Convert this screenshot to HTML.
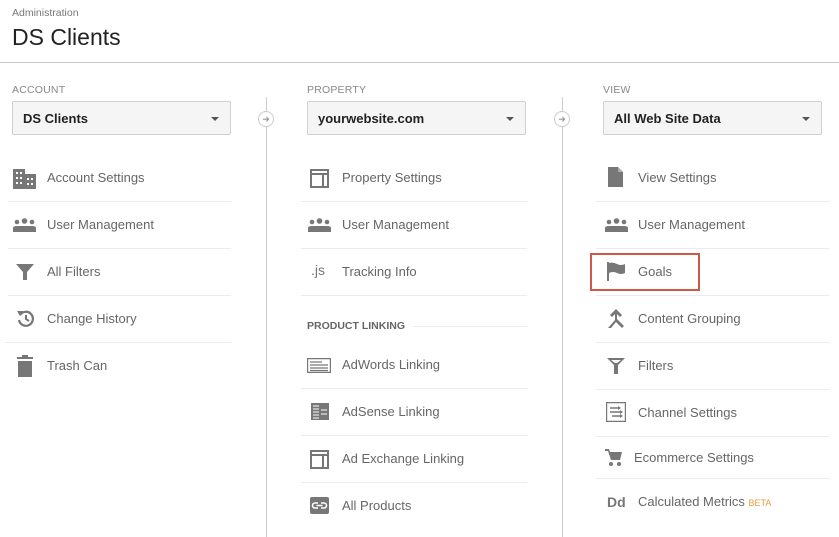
<!DOCTYPE html>
<html><head><meta charset="utf-8"><style>
*{margin:0;padding:0;box-sizing:border-box}
body{width:839px;height:537px;background:#fff;font-family:"Liberation Sans",Arial,sans-serif;position:relative;overflow:hidden;color:#666}
.a{position:absolute}
.lbl{font-size:10.5px;color:#888;letter-spacing:.2px}
.dd{position:absolute;height:34px;border:1px solid #d0d0d0;border-radius:2px;background:#f5f5f5;font-weight:bold;font-size:13px;color:#222;padding:9px 0 0 10px}
.dd:after{content:"";position:absolute;right:11px;top:15px;border-left:4px solid transparent;border-right:4px solid transparent;border-top:4px solid #555}
.vl{position:absolute;width:1px;background:#ccc;top:97px;height:440px}
.circ{position:absolute;width:16px;height:16px;border:1px solid #ccc;border-radius:50%;background:#fff;font-size:9px;color:#999;text-align:center;line-height:14px}
.it{position:absolute;font-size:13px;color:#666;white-space:nowrap}
.sep{position:absolute;height:1px;background:#ececec}
svg{position:absolute}
</style></head><body>
<div class="a" style="left:12px;top:7px;font-size:10.5px;color:#777">Administration</div>
<div class="a" style="left:12px;top:24px;font-size:23px;color:#222">DS Clients</div>
<div class="a" style="left:0;top:62px;width:839px;height:1px;background:#ccc"></div>

<div class="a lbl" style="left:12px;top:84px">ACCOUNT</div>
<div class="a lbl" style="left:307px;top:84px">PROPERTY</div>
<div class="a lbl" style="left:603px;top:84px">VIEW</div>
<div class="dd" style="left:12px;top:101px;width:219px">DS Clients</div>
<div class="dd" style="left:307px;top:101px;width:219px">yourwebsite.com</div>
<div class="dd" style="left:603px;top:101px;width:219px">All Web Site Data</div>

<div class="vl" style="left:266px"></div>
<div class="vl" style="left:562px"></div>
<div class="circ" style="left:258px;top:111px">➜</div>
<div class="circ" style="left:554px;top:111px">➜</div>

<!-- Account column -->
<svg style="left:13px;top:169px" width="23" height="20"><path fill="#777" d="M0 0h12v5h11v15H0z"/><g fill="#fff"><rect x="3" y="3" width="2" height="2"/><rect x="7" y="3" width="2" height="2"/><rect x="3" y="8" width="2" height="2"/><rect x="7" y="8" width="2" height="2"/><rect x="3" y="13" width="2" height="2"/><rect x="7" y="13" width="2" height="2"/><rect x="14" y="9" width="2" height="2"/><rect x="18" y="9" width="2" height="2"/><rect x="14" y="14" width="2" height="2"/><rect x="18" y="14" width="2" height="2"/></g></svg>
<div class="it" style="left:47px;top:170px">Account Settings</div>
<div class="sep" style="left:8px;top:201px;width:223px"></div>
<svg style="left:13px;top:218px" width="23" height="14"><g fill="#777"><circle cx="4" cy="4" r="2.3"/><circle cx="11.5" cy="3" r="2.8"/><circle cx="19" cy="4" r="2.3"/><path d="M0 14v-4q0-2 4-2h15q4 0 4 2v4z"/></g></svg>
<div class="it" style="left:47px;top:217px">User Management</div>
<div class="sep" style="left:8px;top:248px;width:223px"></div>
<svg style="left:16px;top:264px" width="18" height="16"><path fill="#777" d="M0 0h18L11 8v8H7V8z"/></svg>
<div class="it" style="left:47px;top:264px">All Filters</div>
<div class="sep" style="left:8px;top:295px;width:223px"></div>
<svg style="left:17px;top:310px" width="18" height="17"><path fill="none" stroke="#777" stroke-width="2.2" d="M3 5A7 7 0 1 1 2 10"/><path fill="#777" d="M0 1l6 0-3 5z"/><path fill="none" stroke="#777" stroke-width="2" d="M9 5v4l3 2"/></svg>
<div class="it" style="left:47px;top:311px">Change History</div>
<div class="sep" style="left:5px;top:342px;width:226px"></div>
<svg style="left:17px;top:355px" width="16" height="22"><path fill="#777" d="M0 2h5V0h6v2h5v2H0zM1 6h14v16H1z"/></svg>
<div class="it" style="left:47px;top:358px">Trash Can</div>

<!-- Property column -->
<svg style="left:310px;top:169px" width="19" height="19"><path fill="none" stroke="#777" stroke-width="2" d="M1 1h17v17H1zM1 5h17M13 5v13"/></svg>
<div class="it" style="left:342px;top:170px">Property Settings</div>
<div class="sep" style="left:301px;top:201px;width:226px"></div>
<svg style="left:308px;top:218px" width="23" height="14"><g fill="#777"><circle cx="4" cy="4" r="2.3"/><circle cx="11.5" cy="3" r="2.8"/><circle cx="19" cy="4" r="2.3"/><path d="M0 14v-4q0-2 4-2h15q4 0 4 2v4z"/></g></svg>
<div class="it" style="left:342px;top:217px">User Management</div>
<div class="sep" style="left:301px;top:248px;width:226px"></div>
<div class="it" style="left:311px;top:262px;font-size:14px;color:#777">.js</div>
<div class="it" style="left:342px;top:264px">Tracking Info</div>
<div class="sep" style="left:301px;top:295px;width:226px"></div>
<div class="it" style="left:307px;top:320px;font-size:10.5px;font-weight:bold;color:#666">PRODUCT LINKING</div>
<div class="sep" style="left:413px;top:326px;width:114px"></div>
<svg style="left:307px;top:358px" width="24" height="15"><path fill="none" stroke="#777" stroke-width="1.2" d="M.6.6h22.8v13.8H.6z"/><path stroke="#777" stroke-width="1.3" d="M3 4h12M3 7h18M3 10h18M3 12.5h18"/></svg>
<div class="it" style="left:342px;top:357px">AdWords Linking</div>
<div class="sep" style="left:301px;top:388px;width:226px"></div>
<svg style="left:311px;top:403px" width="18" height="17"><path fill="#777" d="M0 0h18v17H0z"/><path stroke="#fff" stroke-width="1" d="M2 3h6M2 6h6M2 9h6M2 12h6M2 15h6M10 7h6M10 11h6"/></svg>
<div class="it" style="left:342px;top:404px">AdSense Linking</div>
<div class="sep" style="left:301px;top:435px;width:226px"></div>
<svg style="left:310px;top:450px" width="19" height="19"><path fill="none" stroke="#777" stroke-width="2" d="M1 1h17v17H1zM1 5h17M13 5v13"/></svg>
<div class="it" style="left:342px;top:451px">Ad Exchange Linking</div>
<div class="sep" style="left:301px;top:482px;width:226px"></div>
<svg style="left:310px;top:497px" width="19" height="17"><rect width="19" height="17" rx="2" fill="#777"/><path fill="none" stroke="#fff" stroke-width="1.6" d="M8 6H5a2.5 2.5 0 0 0 0 5h3M11 6h3a2.5 2.5 0 0 1 0 5h-3M6.5 8.5h6"/></svg>
<div class="it" style="left:342px;top:498px">All Products</div>

<!-- View column -->
<svg style="left:608px;top:167px" width="15" height="20"><path fill="#777" d="M0 0h10l5 5v15H0z"/><path fill="#aaa" d="M10 0v5h5z"/></svg>
<div class="it" style="left:638px;top:170px">View Settings</div>
<div class="sep" style="left:596px;top:201px;width:233px"></div>
<svg style="left:605px;top:218px" width="23" height="14"><g fill="#777"><circle cx="4" cy="4" r="2.3"/><circle cx="11.5" cy="3" r="2.8"/><circle cx="19" cy="4" r="2.3"/><path d="M0 14v-4q0-2 4-2h15q4 0 4 2v4z"/></g></svg>
<div class="it" style="left:638px;top:217px">User Management</div>
<div class="sep" style="left:596px;top:248px;width:233px"></div>
<div class="a" style="left:590px;top:253px;width:110px;height:38px;border:2px solid #cc5a45"></div>
<svg style="left:607px;top:262px" width="19" height="19"><path fill="#777" d="M0 0h2v19H0zM2 1q4-1 8 1t8 0v9q-4 2-8 0t-8 0z"/></svg>
<div class="it" style="left:638px;top:264px">Goals</div>
<div class="sep" style="left:596px;top:295px;width:233px"></div>
<svg style="left:608px;top:309px" width="16" height="19"><path fill="#777" d="M8 0l6 6-2 2-3-3v5l7 7-2 2-6-6-5 6H0l7-8V5L4 8 2 6z"/></svg>
<div class="it" style="left:638px;top:311px">Content Grouping</div>
<div class="sep" style="left:596px;top:342px;width:233px"></div>
<svg style="left:607px;top:358px" width="18" height="16"><path fill="#777" d="M0 0h18L11 7v9H7V7z"/><path fill="#fff" d="M4 2h10l-4 3H8z"/></svg>
<div class="it" style="left:638px;top:358px">Filters</div>
<div class="sep" style="left:596px;top:389px;width:233px"></div>
<svg style="left:606px;top:402px" width="20" height="20"><path fill="none" stroke="#777" stroke-width="1.2" d="M.6.6h18.8v18.8H.6z"/><path fill="none" stroke="#777" stroke-width="1.4" d="M4 6h8M4 10h10M6 14h8"/><path fill="#777" d="M12 4l3 2-3 2zM14 8l3 2-3 2zM14 12l3 2-3 2z"/></svg>
<div class="it" style="left:638px;top:405px">Channel Settings</div>
<div class="sep" style="left:596px;top:436px;width:233px"></div>
<svg style="left:605px;top:449px" width="17" height="17"><path fill="#777" d="M0 0h4l1 3h12l-2 8H6L3 2H0z"/><circle cx="6" cy="15" r="2" fill="#777"/><circle cx="14" cy="15" r="2" fill="#777"/></svg>
<div class="it" style="left:634px;top:450px">Ecommerce Settings</div>
<div class="sep" style="left:596px;top:478px;width:233px"></div>
<div class="it" style="left:607px;top:494px;font-size:14px;font-weight:bold;color:#777">Dd</div>
<div class="it" style="left:638px;top:494px">Calculated Metrics <span style="font-size:9px;color:#e39d3b">BETA</span></div>
</body></html>
